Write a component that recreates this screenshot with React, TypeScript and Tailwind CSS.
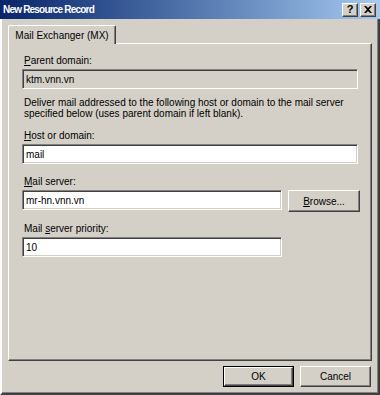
import React from "react";

const font = { fontFamily: '"Liberation Sans", Arial, sans-serif' };

// classic 3D edges
const raised =
  "border border-t-white border-l-white border-r-[#404040] border-b-[#404040] shadow-[inset_-1px_-1px_0_#808080]";
const sunken =
  "border border-t-[#808080] border-l-[#808080] border-b-white border-r-white shadow-[inset_1px_1px_0_#404040,inset_-1px_-1px_0_#d4d0c8]";

const Label = ({ children, className = "" }: { children: React.ReactNode; className?: string }) => (
  <div className={`h-[13px] leading-[13px] text-[10px] text-black pl-[2px] ${className}`}>{children}</div>
);

const Field = ({
  value,
  width,
  disabled,
  className = "",
}: {
  value: string;
  width: string;
  disabled?: boolean;
  className?: string;
}) => (
  <div
    className={`${sunken} ${width} h-[20px] shrink-0 flex items-center pl-[3px] text-[10px] text-black ${
      disabled ? "bg-[#d4d0c8]" : "bg-white"
    } ${className}`}
  >
    {value}
  </div>
);

const CaptionButton = ({ children }: { children: React.ReactNode }) => (
  <div className={`${raised} w-[16px] h-[14px] bg-[#d4d0c8] flex items-center justify-center`}>{children}</div>
);

export default function App() {
  return (
    <div className="w-[380px] h-[395px] bg-[#d4d0c8] flex flex-col overflow-hidden" style={font}>
      {/* title bar */}
      <div className="h-[19px] shrink-0 flex items-center bg-gradient-to-r from-[#0a246a] to-[#a6caf0] pl-[3px] pr-[4px]">
        <span className="text-[10px] font-bold text-white tracking-[-0.8px]">New Resource Record</span>
        <div className="ml-auto flex gap-[2px]">
          <CaptionButton>
            <span className="text-[11px] font-bold leading-none text-black">?</span>
          </CaptionButton>
          <CaptionButton>
            <svg width="8" height="7" viewBox="0 0 8 7">
              <path d="M0 0h2l2 2 2-2h2L5 3.5 8 7H6L4 5 2 7H0l3-3.5z" fill="#000" />
            </svg>
          </CaptionButton>
        </div>
      </div>

      {/* body */}
      <div className="flex-1 flex flex-col border-l-2 border-r-2 border-b-2 border-l-white border-r-[#404040] border-b-[#404040] shadow-[inset_0_-1px_0_#808080,inset_-1px_0_0_#808080] pl-[6px] pt-[6px]">
        {/* tab */}
        <div className="flex">
          <div className="relative z-10 -mb-[1px] h-[19px] w-[108px] bg-[#d4d0c8] border-t border-l border-r border-t-white border-l-white border-r-[#404040] shadow-[inset_-1px_0_0_#808080] rounded-t-[2px] flex items-center justify-center text-[10px] text-black">
            Mail Exchanger (MX)
          </div>
        </div>

        {/* panel */}
        <div className={`${raised} w-[364px] h-[318px] flex flex-col pl-[13px] pt-[10px]`}>
          <Label>
            <u>P</u>arent domain:
          </Label>
          <Field value="ktm.vnn.vn" width="w-[336px]" disabled className="mt-[2px]" />

          <div className="mt-[8px] text-[10px] leading-[11px] text-black pl-[2px] whitespace-nowrap">
            Deliver mail addressed to the following host or domain to the mail server
            <br />
            specified below (uses parent domain if left blank).
          </div>

          <Label className="mt-[10px]">
            <u>H</u>ost or domain:
          </Label>
          <Field value="mail" width="w-[336px]" className="mt-[2px]" />

          <Label className="mt-[11px]">
            <u>M</u>ail server:
          </Label>
          <div className="flex items-start mt-[2px] gap-[6px]">
            <Field value="mr-hn.vnn.vn" width="w-[260px]" />
            <div className={`${raised} w-[72px] h-[22px] bg-[#d4d0c8] flex items-center justify-center text-[10px] text-black`}>
              <span>
                <u>B</u>rowse...
              </span>
            </div>
          </div>

          <Label className="mt-[10px]">
            Mail <u>s</u>erver priority:
          </Label>
          <Field value="10" width="w-[260px]" className="mt-[2px]" />
        </div>

        {/* dialog buttons */}
        <div className="flex justify-end gap-[6px] pr-[7px] mt-[5px]">
          <div className="w-[71px] h-[21px] border border-black">
            <div className={`${raised} w-full h-full bg-[#d4d0c8] flex items-center justify-center text-[10px] text-black`}>
              OK
            </div>
          </div>
          <div className={`${raised} w-[71px] h-[21px] bg-[#d4d0c8] flex items-center justify-center text-[10px] text-black`}>
            Cancel
          </div>
        </div>
      </div>
    </div>
  );
}
